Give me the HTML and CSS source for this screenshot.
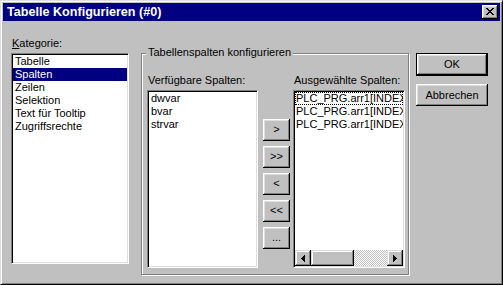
FILE: index.html
```html
<!DOCTYPE html>
<html>
<head>
<meta charset="utf-8">
<link rel="stylesheet" href="styles.css">
</head>
<body>
<div class="window">
  <div class="titlebar">
    <span class="title">Tabelle Konfigurieren (#0)</span>
    <span class="close">
      <svg width="8" height="7" viewBox="0 0 8 7" shape-rendering="crispEdges">
        <path d="M0 0h2v1h-2zM6 0h2v1h-2zM1 1h2v1h-2zM5 1h2v1h-2zM2 2h4v1h-4zM3 3h2v1h-2zM2 4h4v1h-4zM1 5h2v1h-2zM5 5h2v1h-2zM0 6h2v1h-2zM6 6h2v1h-2z" fill="#000"/>
      </svg>
    </span>
  </div>
  <div class="dlg">
    <div class="col-left">
      <div class="lbl"><u>K</u>ategorie:</div>
      <div class="list cat">
        <div class="item">Tabelle</div>
        <div class="item sel">Spalten</div>
        <div class="item">Zeilen</div>
        <div class="item">Selektion</div>
        <div class="item">Text für Tooltip</div>
        <div class="item">Zugriffsrechte</div>
      </div>
    </div>
    <div class="group">
      <div class="legend">Tabellenspalten konfigurieren</div>
      <div class="gcol">
        <div class="lbl">Verfügbare Spalten:</div>
        <div class="list avail">
          <div class="item">dwvar</div>
          <div class="item">bvar</div>
          <div class="item">strvar</div>
        </div>
      </div>
      <div class="btncol">
        <div class="btn arrow">&gt;</div>
        <div class="btn arrow">&gt;&gt;</div>
        <div class="btn arrow">&lt;</div>
        <div class="btn arrow">&lt;&lt;</div>
        <div class="btn arrow">...</div>
      </div>
      <div class="gcol">
        <div class="lbl">Ausgewählte Spalten:</div>
        <div class="list chosen">
          <div class="items">
            <div class="item focus">PLC_PRG.arr1[INDEX]</div>
            <div class="item">PLC_PRG.arr1[INDEX]</div>
            <div class="item">PLC_PRG.arr1[INDEX]</div>
          </div>
          <div class="hscroll">
            <div class="sbtn">
              <svg width="4" height="7" viewBox="0 0 4 7" shape-rendering="crispEdges"><path d="M0 3h1v1h-1zM1 2h1v3h-1zM2 1h1v5h-1zM3 0h1v7h-1z" fill="#000"/></svg>
            </div>
            <div class="thumb"></div>
            <div class="track"></div>
            <div class="sbtn">
              <svg width="4" height="7" viewBox="0 0 4 7" shape-rendering="crispEdges"><path d="M3 3h1v1h-1zM2 2h1v3h-1zM1 1h1v5h-1zM0 0h1v7h-1z" fill="#000"/></svg>
            </div>
          </div>
        </div>
      </div>
    </div>
    <div class="col-right">
      <div class="btn def"><span>OK</span></div>
      <div class="btn cancel">Abbrechen</div>
    </div>
  </div>
</div>
</body>
</html>
```
FILE: styles.css
```css
* { box-sizing: border-box; margin: 0; padding: 0; }
body {
  margin: 0;
  background: #c0c0c0;
  font-family: "Liberation Sans", Arial, sans-serif;
  font-size: 11px;
  line-height: 13px;
  color: #000;
}
.window {
  width: 503px;
  height: 285px;
  background: #c0c0c0;
  border: 1px solid;
  border-color: #dfdfdf #000 #000 #dfdfdf;
  box-shadow: inset 1px 1px #fff, inset -1px -1px #808080;
  padding: 2px;
  display: flex;
  flex-direction: column;
}
.titlebar {
  height: 18px;
  flex: none;
  background: #000080;
  color: #fff;
  display: flex;
  align-items: center;
  justify-content: space-between;
  padding: 0 2px 0 4px;
}
.title { font-weight: bold; font-size: 12.6px; }
.close {
  width: 16px;
  height: 14px;
  background: #c0c0c0;
  box-shadow: inset -1px -1px #000, inset 1px 1px #fff, inset -2px -2px #808080, inset 2px 2px #dfdfdf;
  display: flex;
  align-items: center;
  justify-content: center;
  padding: 0 1px 1px 0;
}
.close svg { display: block; }
.dlg {
  display: flex;
  align-items: flex-start;
  padding-left: 8px;
}
.lbl { height: 13px; white-space: nowrap; }
.col-left { width: 118px; margin-top: 16px; }
.col-left .lbl { padding-left: 1px; }
.list {
  background: #fff;
  border: 1px solid;
  border-color: #808080 #fff #fff #808080;
  box-shadow: inset 1px 1px #000, inset -1px -1px #dfdfdf;
  padding: 1px;
  margin-top: 3px;
  overflow: hidden;
}
.item { height: 13px; padding-left: 2px; white-space: nowrap; overflow: hidden; }
.item.sel { background: #000080; color: #fff; }
.cat { height: 211px; }
.group {
  position: relative;
  margin-left: 12px;
  margin-top: 32px;
  width: 268px;
  height: 222px;
  border: 1px solid #808080;
  box-shadow: 1px 1px 0 #fff, inset 1px 1px 0 #fff;
  display: flex;
  align-items: flex-start;
  padding: 20px 0 0 5px;
}
.legend {
  position: absolute;
  top: -8px;
  left: 4px;
  padding: 0 2px;
  background: #c0c0c0;
  white-space: nowrap;
}
.gcol .lbl { padding-left: 1px; }
.avail { width: 111px; height: 178px; }
.avail .item { padding-left: 2px; }
.btncol {
  margin-left: 5px;
  margin-top: 45px;
  display: flex;
  flex-direction: column;
  gap: 5px;
}
.btn {
  background: #c0c0c0;
  box-shadow: inset -1px -1px #000, inset 1px 1px #fff, inset -2px -2px #808080, inset 2px 2px #dfdfdf;
  display: flex;
  align-items: center;
  justify-content: center;
  white-space: nowrap;
}
.arrow { width: 27px; height: 22px; padding-bottom: 1px; }
.btncol + .gcol { margin-left: 3px; }
.chosen { width: 112px; height: 178px; display: flex; flex-direction: column; }
.items { flex: 1; overflow: hidden; }
.chosen .item { padding-left: 1px; }
.item.focus { outline: 1px dotted #000; outline-offset: -1px; }
.hscroll { height: 16px; display: flex; flex: none; }
.sbtn {
  width: 16px;
  height: 16px;
  flex: none;
  background: #c0c0c0;
  box-shadow: inset -1px -1px #000, inset 1px 1px #dfdfdf, inset -2px -2px #808080, inset 2px 2px #fff;
  display: flex;
  align-items: center;
  justify-content: center;
}
.sbtn svg { display: block; }
.thumb {
  width: 43px;
  flex: none;
  background: #c0c0c0;
  box-shadow: inset -1px -1px #000, inset 1px 1px #dfdfdf, inset -2px -2px #808080, inset 2px 2px #fff;
}
.track {
  flex: 1;
  background: repeating-conic-gradient(#fff 0 25%, #c0c0c0 0 50%) 0 0 / 2px 2px;
}
.col-right {
  margin-left: 7px;
  margin-top: 32px;
  display: flex;
  flex-direction: column;
  gap: 8px;
}
.col-right .btn { width: 72px; height: 23px; }
.btn.def {
  border: 1px solid #000;
  box-shadow: none;
  padding: 0;
}
.btn.def span {
  display: flex;
  width: 100%;
  height: 100%;
  align-items: center;
  justify-content: center;
  box-shadow: inset -1px -1px #000, inset 1px 1px #fff, inset -2px -2px #808080, inset 2px 2px #dfdfdf;
}
.btn.cancel { height: 22px; }
```
